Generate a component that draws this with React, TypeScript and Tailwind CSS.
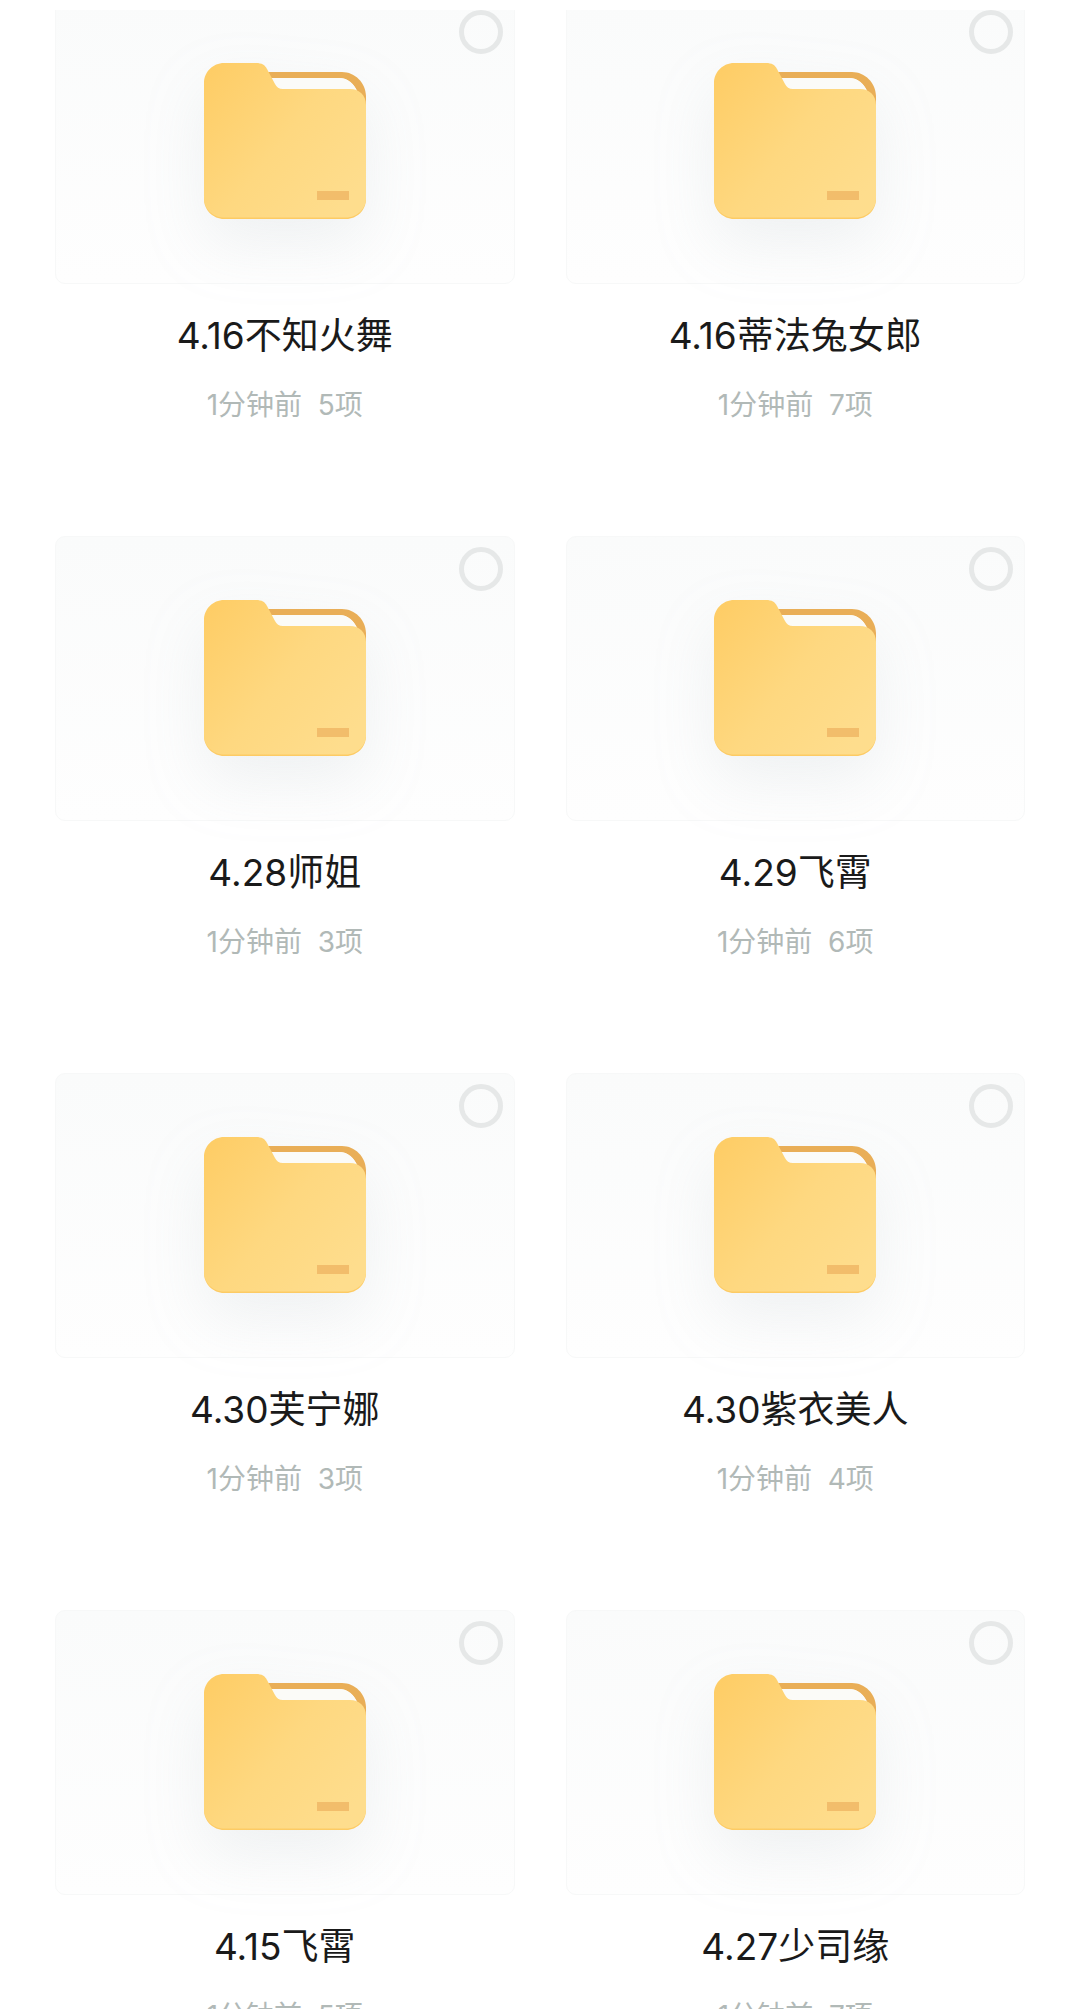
import React from "react";

interface FolderItem {
  name: string;
  count: number;
}

const folders: FolderItem[] = [
  { name: "4.16不知火舞", count: 5 },
  { name: "4.16蒂法兔女郎", count: 7 },
  { name: "4.28师姐", count: 3 },
  { name: "4.29飞霄", count: 6 },
  { name: "4.30芙宁娜", count: 3 },
  { name: "4.30紫衣美人", count: 4 },
  { name: "4.15飞霄", count: 5 },
  { name: "4.27少司缘", count: 7 },
];

const FolderIcon: React.FC<{ id: number }> = ({ id }) => (
  <svg
    width="162"
    height="156"
    viewBox="0 0 162 156"
    className="drop-shadow-[0_26px_30px_rgba(150,160,170,0.13)]"
  >
    <defs>
      <linearGradient id={`front-${id}`} x1="0" y1="0" x2="1" y2="0.75">
        <stop offset="0" stopColor="#fecc64" />
        <stop offset="0.55" stopColor="#fed880" />
        <stop offset="1" stopColor="#fedd8d" />
      </linearGradient>
    </defs>
    {/* back sheet */}
    <path
      d="M60 9H138C151 9 162 20 162 33V60H155V38C155 26 147 15 135 15H60Z"
      fill="#e9ae57"
    />
    <path d="M60 15H135C144 15 150 21 154 30H60Z" fill="#fbfbf8" />
    {/* bottom edge */}
    <path d="M0 120H162V136C162 147 153 156 142 156H20C9 156 0 147 0 136Z" fill="#fdcb64" />
    {/* front */}
    <path
      d="M20 0H52C58 0 61 2 63 6L71 21C72.500 24 75 26 79 26H146C155 26 162 32 162 42V135C162 146 153 154.500 142 154.500H20C9 154.500 0 146 0 135V20C0 9 9 0 20 0Z"
      fill={`url(#front-${id})`}
    />
    <rect x="113" y="128" width="32" height="9" fill="#f2bd6b" />
  </svg>
);

const FolderCard: React.FC<{ item: FolderItem; id: number }> = ({ item, id }) => (
  <div className="flex h-[537px] flex-col items-center">
    <div className="relative flex h-[285px] w-full justify-center rounded-[10px] border border-[#f7f8f8] bg-gradient-to-b from-[#fafbfb] to-[#fefefe] pt-[63px]">
      <div className="absolute right-[11px] top-[10px] h-[44px] w-[44px] rounded-full border-[5px] border-[#e6e8e8]" />
      <div>
        <FolderIcon id={id} />
      </div>
    </div>
    <div className="mt-[28px] text-[37px] leading-[48px] text-[#1a1a1a]">{item.name}</div>
    <div className="mt-[26px] whitespace-pre text-[28px] leading-[38px] text-[#b1b9b7]">
      {`1分钟前  ${item.count}项`}
    </div>
  </div>
);

export default function App() {
  return (
    <div className="relative h-[2009px] w-[1080px] overflow-hidden bg-white font-['Inter','Noto_Sans_CJK_SC',sans-serif]">
      {/* top of the first row is cut off by the screen edge */}
      <div className="absolute left-0 top-0 z-10 h-[10px] w-full bg-white" />
      <div className="-mt-px grid grid-cols-2 gap-x-[51px] px-[55px]">
        {folders.map((item, i) => (
          <FolderCard key={item.name} item={item} id={i} />
        ))}
      </div>
    </div>
  );
}
